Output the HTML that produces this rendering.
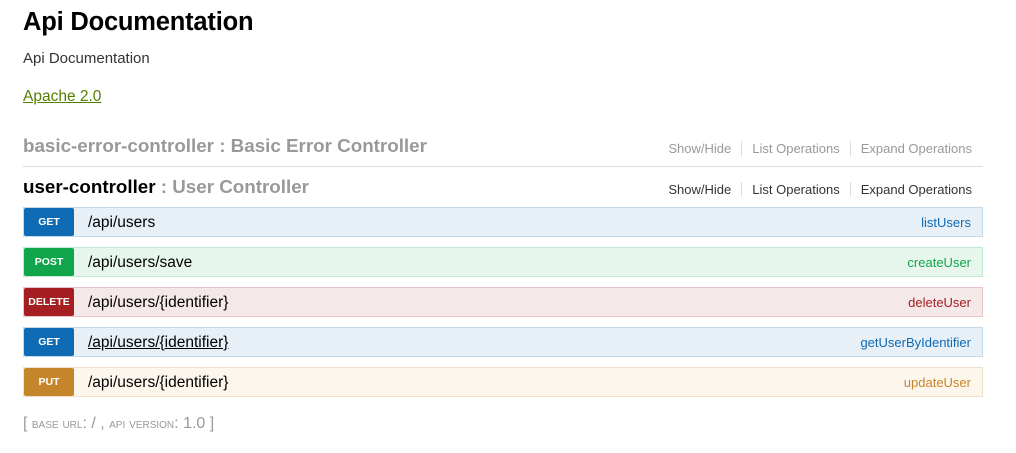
<!DOCTYPE html>
<html><head><meta charset="utf-8"><style>
*{margin:0;padding:0;box-sizing:border-box}
body{width:1016px;height:453px;background:#fff;font-family:"Liberation Sans","DejaVu Sans",sans-serif;position:relative;overflow:hidden;color:#000}
.a{position:absolute;white-space:nowrap}
h1{position:absolute;left:23px;top:8px;font-size:25.5px;font-weight:bold;letter-spacing:-0.2px}
.ctl{position:absolute;left:23px;font-size:18.8px;font-weight:bold;color:#999}
.ops{position:absolute;right:44px;font-size:13px;color:#999;display:flex}
.ops span{padding:0 10px;border-left:1px solid #ddd;line-height:15px}
.ops span:first-child{border-left:none}
.ops span:last-child{padding-right:0}
.row{position:absolute;left:23px;width:960px;height:30px;border:1px solid}
.b{position:absolute;left:0;top:0;width:50px;height:28px;border-radius:2px;color:#fff;font-size:10.5px;font-weight:bold;text-align:center;line-height:28px}
.p{position:absolute;left:64px;top:6px;font-size:15.5px;color:#000}
.n{position:absolute;right:11px;top:7px;font-size:13px}
</style></head><body>
<h1>Api Documentation</h1>
<div class="a" style="left:23px;top:50px;font-size:15px;color:#333">Api Documentation</div>
<div class="a" style="left:23px;top:88px;font-size:15.5px;color:#547f00;text-decoration:underline">Apache 2.0</div>

<div class="ctl" style="top:135px">basic-error-controller : Basic Error Controller</div>
<div class="ops" style="top:141px"><span>Show/Hide</span><span>List Operations</span><span>Expand Operations</span></div>
<div class="a" style="left:23px;top:166px;width:960px;height:1px;background:#ddd"></div>

<div class="ctl" style="top:176px"><span style="color:#000">user-controller</span> : User Controller</div>
<div class="ops" style="top:182px;color:#333"><span>Show/Hide</span><span>List Operations</span><span>Expand Operations</span></div>

<div class="row" style="top:207px;background:#e7f0f7;border-color:#c3d9ec"><div class="b" style="background:#0f6ab4">GET</div><div class="p">/api/users</div><div class="n" style="color:#0f6ab4">listUsers</div></div>
<div class="row" style="top:247px;background:#e7f6ec;border-color:#c3e8d1"><div class="b" style="background:#10a54a">POST</div><div class="p">/api/users/save</div><div class="n" style="color:#10a54a">createUser</div></div>
<div class="row" style="top:287px;background:#f5e8e8;border-color:#e8c6c7"><div class="b" style="background:#a41e22">DELETE</div><div class="p">/api/users/{identifier}</div><div class="n" style="color:#a41e22">deleteUser</div></div>
<div class="row" style="top:327px;background:#e7f0f7;border-color:#c3d9ec"><div class="b" style="background:#0f6ab4">GET</div><div class="p" style="text-decoration:underline">/api/users/{identifier}</div><div class="n" style="color:#0f6ab4">getUserByIdentifier</div></div>
<div class="row" style="top:367px;background:#fcf6ed;border-color:#f0e0ca"><div class="b" style="background:#c5862b">PUT</div><div class="p">/api/users/{identifier}</div><div class="n" style="color:#c5862b">updateUser</div></div>

<div class="a" style="left:23px;top:415px;font-size:16px;color:#999">[ <span style="font-variant:small-caps;font-size:14px">base url</span>: / , <span style="font-variant:small-caps;font-size:14px">api version</span>: 1.0 ]</div>
</body></html>
